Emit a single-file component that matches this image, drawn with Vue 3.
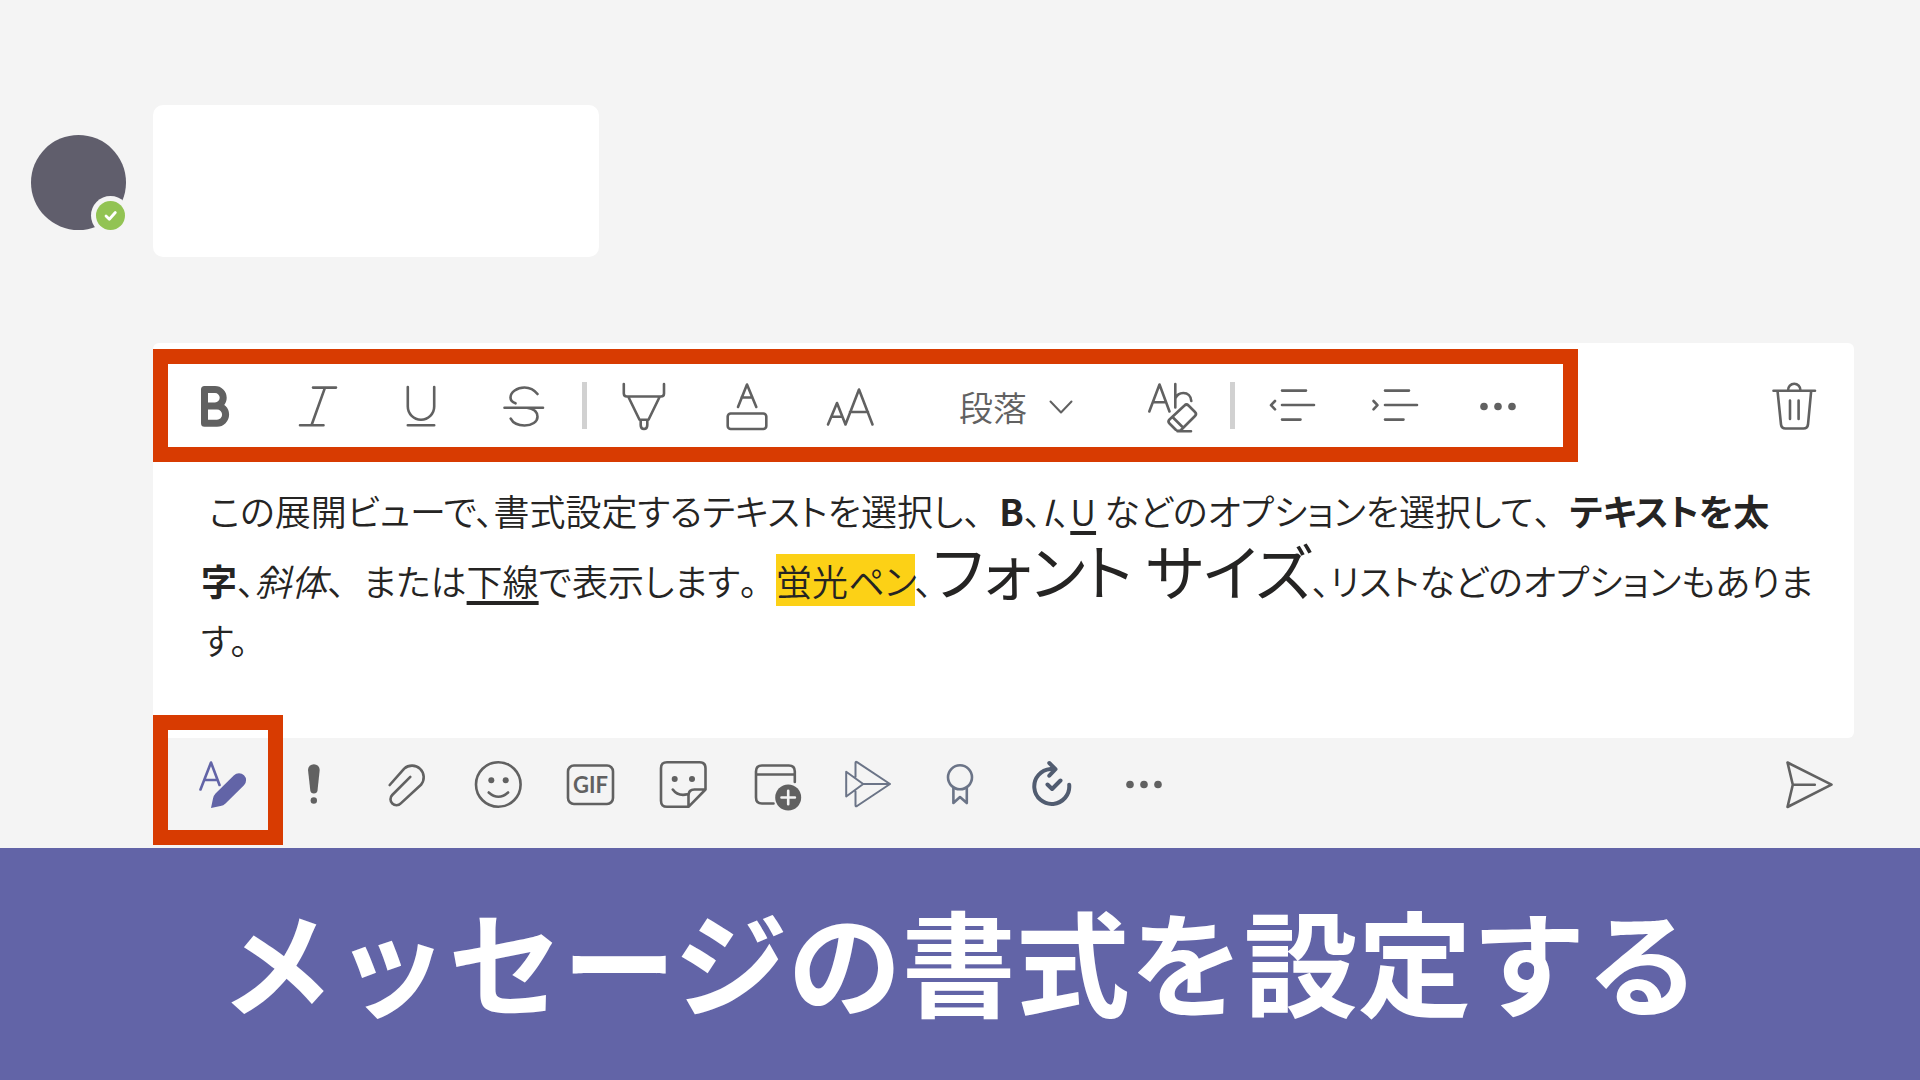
<template>
  <div class="page">
    <section class="chat">
      <div class="message">
        <div class="avatar">
          <svg class="status" viewBox="0 0 39 39" role="img" aria-label="連絡可能">
            <circle cx="19.5" cy="19.5" r="19.5" fill="#f4f4f4" stroke="none" />
            <circle cx="19.5" cy="19.5" r="14.5" fill="#92c353" stroke="none" />
            <path d="M15 20l3.300 3.300 6-6.800" fill="none" stroke="#fff" stroke-width="2.800" />
          </svg>
        </div>
        <div class="bubble"></div>
      </div>

      <div class="compose">
        <div class="head">
          <div class="toolbar" role="toolbar" aria-label="書式">
            <div class="group">
              <button type="button" aria-label="太字" @click="format('bold')">
                <svg viewBox="0 0 48 48"><path stroke-width="7" d="M13.5 7.5H24a8.2 8.2 0 0 1 0 16.4H13.5zM13.5 24H26a8.6 8.6 0 0 1 0 17.2H13.5z" /></svg>
              </button>
              <button type="button" aria-label="斜体" @click="format('italic')">
                <svg viewBox="0 0 48 48"><path d="M19 5.600h23M6 43.200h23.500M31 5.600L17.500 43.200" /></svg>
              </button>
              <button type="button" aria-label="下線" @click="format('underline')">
                <svg viewBox="0 0 48 48"><path d="M10.800 5v19.500a13.200 13.200 0 0 0 26.400 0V5M10.800 43.300h26.400" /></svg>
              </button>
              <button type="button" aria-label="取り消し線" @click="format('strikeThrough')">
                <svg viewBox="0 0 48 48"><path d="M4.500 25.700h38.500M37.500 12C34 7.500 29.500 5.500 24.500 5.500 17 5.500 10.500 10 10.500 15.500c0 2.500 2 4.800 5 5.800M27 25.700c7 1 10.500 4.500 10.500 9 0 5-5.500 8.800-13 8.800-6.500 0-11.500-2.500-13.800-6.800" /></svg>
              </button>
            </div>
            <span class="sep"></span>
            <div class="group">
              <button type="button" aria-label="蛍光ペン" @click="format('hiliteColor', '#fcd116')">
                <svg viewBox="0 0 48 48"><path d="M3.800 2v9.500q0 3 3 3h34.200q3 0 3-3V2M8.200 14.500L19.500 37.700h9L39.800 14.500M20.700 37.700v5.300q0 4 3.300 4t3.300-4v-5.300" /></svg>
              </button>
              <button type="button" aria-label="フォントの色">
                <svg viewBox="0 0 48 48"><path d="M15 25l9-22.500L33.300 25M18.500 15.500h11" /><rect x="4.700" y="31.500" width="38.600" height="15.500" rx="3" /></svg>
              </button>
              <button type="button" aria-label="フォント サイズ">
                <svg viewBox="0 0 48 48"><path d="M2 42.500L11 21l8.500 21.500L33 7.500l13.500 35M5.500 34.700h11M24 30h18" /></svg>
              </button>
            </div>
            <label class="para">
              <select v-model="style" aria-label="段落スタイル">
                <option>段落</option>
              </select>
              <svg viewBox="0 0 24 24"><path d="M1.500 7.500L12 18.500 22.500 7.500" /></svg>
            </label>
            <button type="button" aria-label="書式のクリア" @click="format('removeFormat')">
              <svg viewBox="0 0 48 48">
                <path d="M1.300 29.500L11.500 2.500 21.500 29.500M5 20.300h13M27.300 2v23.500M27.300 16.500c1.500-3.500 4.500-5.500 8-5.500 4.500 0 7.700 3 8 8" />
                <path d="M36.500 23.500q2-2 4 0l6.500 6.500q2 2 0 4L33 48q-2.500 1.500-5 0l-6.500-6.500q-2-2 0-4zM24.500 35l10 10M29.500 49.200h13.500" />
              </svg>
            </button>
            <span class="sep"></span>
            <div class="group">
              <button type="button" aria-label="インデント解除" @click="format('outdent')">
                <svg viewBox="0 0 48 48"><path d="M14 8.600h24M14 23h32M14 37.600h18.500M7 19l-4 4.200 4 4.200" /></svg>
              </button>
              <button type="button" aria-label="インデント" @click="format('indent')">
                <svg viewBox="0 0 48 48"><path d="M14 8.600h24M14 23h32M14 37.600h18.500M2.500 19l4 4.200-4 4.200" /></svg>
              </button>
              <button type="button" aria-label="その他の書式">
                <svg viewBox="0 0 48 48" class="solid"><circle v-for="x in dots" :key="x" :cx="x" cy="24.500" r="3.800" /></svg>
              </button>
            </div>
          </div>
          <button type="button" class="trash" aria-label="破棄">
            <svg viewBox="0 0 48 48"><path d="M3.500 8.700h41.500M18 8.500a6 6.500 0 0 1 12.500 0M7.500 8.700L11 42.500q.500 4 4.500 4h18q4 0 4.500-4L41.200 8.700M20 18.500v18.500M28.600 18.500v18.500" /></svg>
          </button>
        </div>

        <div class="editor" contenteditable="true" role="textbox" aria-multiline="true" aria-label="メッセージ" spellcheck="false">&nbsp;この展開ビューで、書式設定するテキストを選択し<span class="full">、</span><b>B</b>、<i>I</i>、<u>U</u> などのオプションを選択して<span class="full">、</span><b>テキストを太</b><br><b>字</b>、<i>斜体</i><span class="full">、</span>または<u>下線</u>で表示します<span class="full">。</span><mark>蛍光ペン</mark>、<span class="big">フォント サイズ</span>、リストなどのオプションもありま<br>す。</div>
      </div>

      <div class="actions">
        <button type="button" class="active" aria-label="書式">
          <svg viewBox="0 0 48 48">
            <path d="M2.500 29.500L13 2.500l8.500 22.500M6.500 20h12.500" />
            <path class="fill" d="M13 48l2-9.500q.600-3 2.500-5L36 15.200a7 7 0 0 1 10 10L27.500 43.500q-2 2-5 2.500z" />
          </svg>
        </button>
        <button type="button" aria-label="配信オプション">
          <svg viewBox="0 0 48 48" class="solid"><path d="M18 10a5.800 5.800 0 0 1 11.700 0l-2.200 20.500q-.400 3-3.600 3t-3.600-3z" /><circle cx="23.800" cy="40.500" r="3.200" /></svg>
        </button>
        <button type="button" aria-label="添付">
          <svg viewBox="0 0 48 48"><path d="M7.700 25L22.200 8.600A11.700 11.700 0 0 1 39 24.800L18.800 43.400A6 6 0 0 1 10.200 35L28.300 16.900" /></svg>
        </button>
        <button type="button" aria-label="絵文字">
          <svg viewBox="0 0 48 48"><circle cx="24.300" cy="24.500" r="22.300" /><path d="M14.700 32.500q9.700 8.500 19.400 0" /><circle class="fill" cx="17.300" cy="20.200" r="3" /><circle class="fill" cx="31.700" cy="20.200" r="3" /></svg>
        </button>
        <button type="button" aria-label="GIF">
          <svg viewBox="0 0 48 48"><rect x="2" y="5.500" width="45" height="38.500" rx="6" /><text x="24.500" y="33" text-anchor="middle">GIF</text></svg>
        </button>
        <button type="button" aria-label="ステッカー">
          <svg viewBox="0 0 48 48">
            <path d="M30.500 46.800H9q-6 0-6-6V8.200q0-6 6-6h32.500q6 0 6 6v21.300zM30.500 46.800V35.500q0-6 6-6h11M14.800 29.500q5 7 14.500 4.800" />
            <circle class="fill" cx="16.700" cy="19" r="3" /><circle class="fill" cx="34" cy="19" r="3" />
          </svg>
        </button>
        <button type="button" aria-label="会議のスケジュール">
          <svg viewBox="0 0 48 48">
            <path d="M44.800 22V11.500q0-6-6-6H12q-6 0-6 6v26q0 6 6 6h11.500M6 14.500h38.800" />
            <circle class="fill" cx="38.200" cy="37.500" r="13" /><path stroke="#f4f4f4" d="M38.200 30.800v13.400M31.500 37.500h13.400" />
          </svg>
        </button>
        <button type="button" class="slate" aria-label="Stream">
          <svg viewBox="0 0 48 48"><path stroke-width="2" d="M13.500 17V2.800q0-1.500 1.500-.700L48 24l-33 22q-1.500.800-1.500-.700V31.500M4.200 11.700L21.200 24 4.200 36.500zM21.200 24h26.800" /></svg>
        </button>
        <button type="button" class="slate" aria-label="称賛">
          <svg viewBox="0 0 48 48"><circle cx="26" cy="17.300" r="12" /><path d="M19.400 28v15l6.600-6 6.800 6V28" /></svg>
        </button>
        <button type="button" class="slate dark" aria-label="更新">
          <svg viewBox="0 0 48 48"><path stroke-width="4" d="M43.200 24.800A17.500 17.500 0 1 1 24.500 9h4M23.300 3l6.200 6.200-6.200 6.500M21.500 24.500l4.600 4.500 8.400-8.500" /></svg>
        </button>
        <button type="button" aria-label="その他">
          <svg viewBox="0 0 48 48" class="solid"><circle v-for="x in dots" :key="x" :cx="x + 2" cy="24.500" r="3.800" /></svg>
        </button>
        <button type="button" class="send" aria-label="送信">
          <svg viewBox="0 0 48 48"><path d="M2.500 2.500L46.500 24.700 2.500 47l5.300-22.300zM7.800 24.700h22" /></svg>
        </button>
      </div>
    </section>

    <footer class="banner">
      <h1>メッセージの書式を設定する</h1>
    </footer>
  </div>
</template>

<script setup>
import { ref } from "vue";

const style = ref("段落")
const dots = [10, 24, 38]

// applies a command to the text selected in the editor
const format = (command, value = null) => {
    document.execCommand(command, false, value)
}
</script>

<style>
body {
  margin: 0;
  background: #f4f4f4;
}
</style>

<style scoped>
.page {
  display: flex;
  flex-direction: column;
  min-height: 100vh;
  font-family: "Noto Sans CJK JP", sans-serif;
  color: #252423;
}
.chat {
  padding: 105px 66px 0 31px;
}
.message {
  display: flex;
  align-items: flex-start;
  gap: 27px;
}
.avatar {
  position: relative;
  width: 95px;
  height: 95px;
  margin-top: 30px;
  border-radius: 50%;
  background: #605e6c;
}
.status {
  position: absolute;
  right: -4px;
  bottom: -5px;
  width: 39px;
  height: 39px;
}
.bubble {
  width: 446px;
  height: 152px;
  border-radius: 10px;
  background: #fff;
}
.compose {
  margin: 86px 0 0 122px;
  padding-top: 6px;
  border-radius: 6px;
  background: #fff;
}
.head {
  display: flex;
  align-items: center;
  justify-content: space-between;
}
.toolbar {
  display: flex;
  align-items: center;
  height: 83px;
  padding: 0 41px 0 23px;
  border: 15px solid #d83b01;
}
.group {
  display: flex;
  gap: 55px;
}
button {
  width: 48px;
  height: 48px;
  padding: 0;
  border: 0;
  background: none;
  color: #616161;
  cursor: pointer;
}
svg {
  display: block;
  overflow: visible;
  fill: none;
  stroke: currentColor;
  stroke-width: 2.6;
  stroke-linecap: round;
  stroke-linejoin: round;
}
.solid, .fill {
  fill: currentColor;
  stroke: none;
}
svg text {
  fill: currentColor;
  stroke: none;
  font: bold 22px Lato, sans-serif;
}
.sep {
  width: 5px;
  height: 47px;
  margin: 0 33px 0 34px;
  background: #d1d1d1;
}
.para {
  display: flex;
  align-items: center;
  gap: 20px;
  margin: 0 75px 0 85px;
  color: #616161;
}
.para select {
  appearance: none;
  width: 70px;
  height: 48px;
  padding: 0;
  border: 0;
  background: none;
  font: 34px "Noto Sans CJK JP", sans-serif;
  font-weight: 350;
  color: inherit;
}
.para svg {
  width: 24px;
  height: 24px;
  stroke-width: 2;
}
.trash {
  margin-right: 36px;
}
.editor {
  box-sizing: border-box;
  min-height: 276px;
  padding: 19px 24px 0 48px;
  outline: none;
  font-size: 36px;
  font-weight: 350;
  line-height: 59px;
  font-feature-settings: "palt";
}
.editor b {
  font-weight: bold;
}
.editor u {
  text-underline-offset: 5px;
  text-decoration-thickness: 4px;
  text-decoration-skip-ink: none;
}
.editor mark {
  background: #fcd116;
  color: inherit;
}
/* punctuation that keeps its full width */
.full {
  font-feature-settings: normal;
}
.big {
  font-size: 61px;
  font-weight: 400;
}
.actions {
  display: flex;
  gap: 44px;
  padding: 22px 21px 40px 0;
  margin-left: 167px;
}
.active {
  position: relative;
  color: #6264a7;
}
.active::after {
  content: "";
  position: absolute;
  inset: -45px -37px -37px -45px;
  border: 15px solid #d83b01;
}
.slate {
  color: #6b7487;
}
.dark {
  color: #515c70;
}
.send {
  margin-left: auto;
}
.banner {
  flex: 1;
  display: flex;
  align-items: center;
  justify-content: center;
  padding-bottom: 10px;
  background: #6264a7;
}
h1 {
  margin: 0;
  font-size: 114px;
  line-height: 160px;
  color: #fff;
}
</style>
